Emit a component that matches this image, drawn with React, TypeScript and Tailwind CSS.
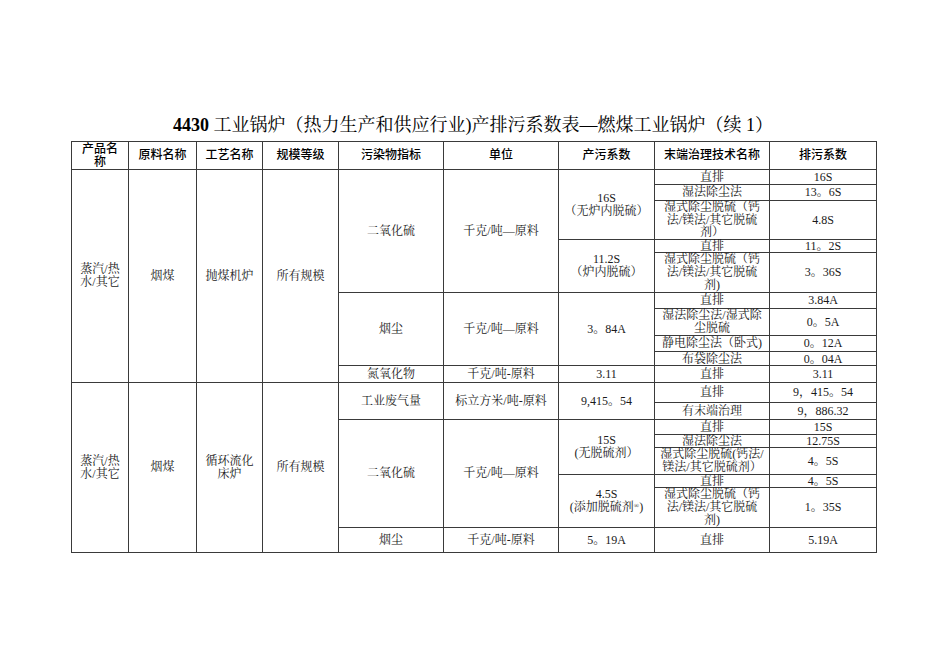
import React from "react";

const serif = "font-['Liberation_Serif','Noto_Serif_CJK_SC','Noto_Sans_CJK_SC',serif]";
const sans = "font-['Liberation_Sans','Noto_Sans_CJK_SC',sans-serif]";

function C({
  rs,
  lh = "leading-[13px]",
  children,
}: {
  rs?: number;
  lh?: string;
  children?: React.ReactNode;
}) {
  return (
    <td
      rowSpan={rs}
      className={`border border-[#3a3a3a] p-0 text-center align-middle text-[12px] text-[#1a1a1a] ${lh}`}
    >
      {children}
    </td>
  );
}

function H({ children, lh = "leading-[13px]" }: { children: React.ReactNode; lh?: string }) {
  return (
    <th
      className={`border border-[#3a3a3a] p-0 text-center align-middle text-[12px] font-medium text-black ${sans} ${lh}`}
    >
      {children}
    </th>
  );
}

export default function App() {
  return (
    <div className={`min-h-[672px] w-[950px] bg-white ${serif}`}>
      <div className="ml-[71px] w-[804px] pt-[113px]">
        <h1 className="mb-[4px] text-center text-[18px] leading-[24px] text-black">
          <span className="font-bold">4430</span> 工业锅炉（热力生产和供应行业)产排污系数表—燃煤工业锅炉（续 1）
        </h1>
        <table className="w-[805px] table-fixed border-collapse">
          <colgroup>
            <col className="w-[57px]" />
            <col className="w-[68px]" />
            <col className="w-[66px]" />
            <col className="w-[76px]" />
            <col className="w-[105px]" />
            <col className="w-[115px]" />
            <col className="w-[96px]" />
            <col className="w-[115px]" />
            <col className="w-[107px]" />
          </colgroup>
          <thead>
            <tr className="h-[28px]">
              <H>
                产品名
                <br />称
              </H>
              <H>原料名称</H>
              <H>工艺名称</H>
              <H>规模等级</H>
              <H>污染物指标</H>
              <H>单位</H>
              <H>产污系数</H>
              <H>末端治理技术名称</H>
              <H>排污系数</H>
            </tr>
          </thead>
          <tbody>
            <tr className="h-[15px]">
              <C rs={10}>
                蒸汽/热
                <br />
                水/其它
              </C>
              <C rs={10}>烟煤</C>
              <C rs={10}>抛煤机炉</C>
              <C rs={10}>所有规模</C>
              <C rs={5}>二氧化硫</C>
              <C rs={5}>千克/吨—原料</C>
              <C rs={3}>
                16S
                <br />
                （无炉内脱硫）
              </C>
              <C>直排</C>
              <C>16S</C>
            </tr>
            <tr className="h-[16px]">
              <C>湿法除尘法</C>
              <C>13。6S</C>
            </tr>
            <tr className="h-[39px]">
              <C lh="leading-[12.6px]">
                湿式除尘脱硫（钙
                <br />
                法/镁法/其它脱硫
                <br />
                剂）
              </C>
              <C>4.8S</C>
            </tr>
            <tr className="h-[13px]">
              <C rs={2}>
                11.2S
                <br />
                （炉内脱硫）
              </C>
              <C lh="leading-[12px]">直排</C>
              <C lh="leading-[12px]">11。2S</C>
            </tr>
            <tr className="h-[40px]">
              <C>
                湿式除尘脱硫（钙
                <br />
                法/镁法/其它脱硫
                <br />
                剂)
              </C>
              <C>3。36S</C>
            </tr>
            <tr className="h-[16px]">
              <C rs={4}>烟尘</C>
              <C rs={4}>千克/吨—原料</C>
              <C rs={4}>3。84A</C>
              <C>直排</C>
              <C>3.84A</C>
            </tr>
            <tr className="h-[27px]">
              <C>
                湿法除尘法/湿式除
                <br />
                尘脱硫
              </C>
              <C>0。5A</C>
            </tr>
            <tr className="h-[16px]">
              <C>静电除尘法（卧式)</C>
              <C>0。12A</C>
            </tr>
            <tr className="h-[14px]">
              <C lh="leading-[12px]">布袋除尘法</C>
              <C lh="leading-[12px]">0。04A</C>
            </tr>
            <tr className="h-[17px]">
              <C>氮氧化物</C>
              <C>千克/吨-原料</C>
              <C>3.11</C>
              <C>直排</C>
              <C>3.11</C>
            </tr>
            <tr className="h-[20px]">
              <C rs={8}>
                蒸汽/热
                <br />
                水/其它
              </C>
              <C rs={8}>烟煤</C>
              <C rs={8}>
                循环流化
                <br />
                床炉
              </C>
              <C rs={8}>所有规模</C>
              <C rs={2}>工业废气量</C>
              <C rs={2}>标立方米/吨-原料</C>
              <C rs={2}>9,415。54</C>
              <C>直排</C>
              <C>9，415。54</C>
            </tr>
            <tr className="h-[17px]">
              <C>有末端治理</C>
              <C>9，886.32</C>
            </tr>
            <tr className="h-[15px]">
              <C rs={5}>二氧化硫</C>
              <C rs={5}>千克/吨—原料</C>
              <C rs={3}>
                15S
                <br />
                (无脱硫剂）
              </C>
              <C>直排</C>
              <C>15S</C>
            </tr>
            <tr className="h-[13px]">
              <C lh="leading-[12px]">湿法除尘法</C>
              <C lh="leading-[12px]">12.75S</C>
            </tr>
            <tr className="h-[27px]">
              <C>
                湿式除尘脱硫(钙法/
                <br />
                镁法/其它脱硫剂）
              </C>
              <C>4。5S</C>
            </tr>
            <tr className="h-[13px]">
              <C rs={2}>
                4.5S
                <br />
                (添加脱硫剂
                <sup className="text-[7px]">®</sup>)
              </C>
              <C lh="leading-[12px]">直排</C>
              <C lh="leading-[12px]">4。5S</C>
            </tr>
            <tr className="h-[40px]">
              <C>
                湿式除尘脱硫（钙
                <br />
                法/镁法/其它脱硫
                <br />
                剂)
              </C>
              <C>1。35S</C>
            </tr>
            <tr className="h-[25px]">
              <C>烟尘</C>
              <C>千克/吨-原料</C>
              <C>5。19A</C>
              <C>直排</C>
              <C>5.19A</C>
            </tr>
          </tbody>
        </table>
      </div>
    </div>
  );
}
